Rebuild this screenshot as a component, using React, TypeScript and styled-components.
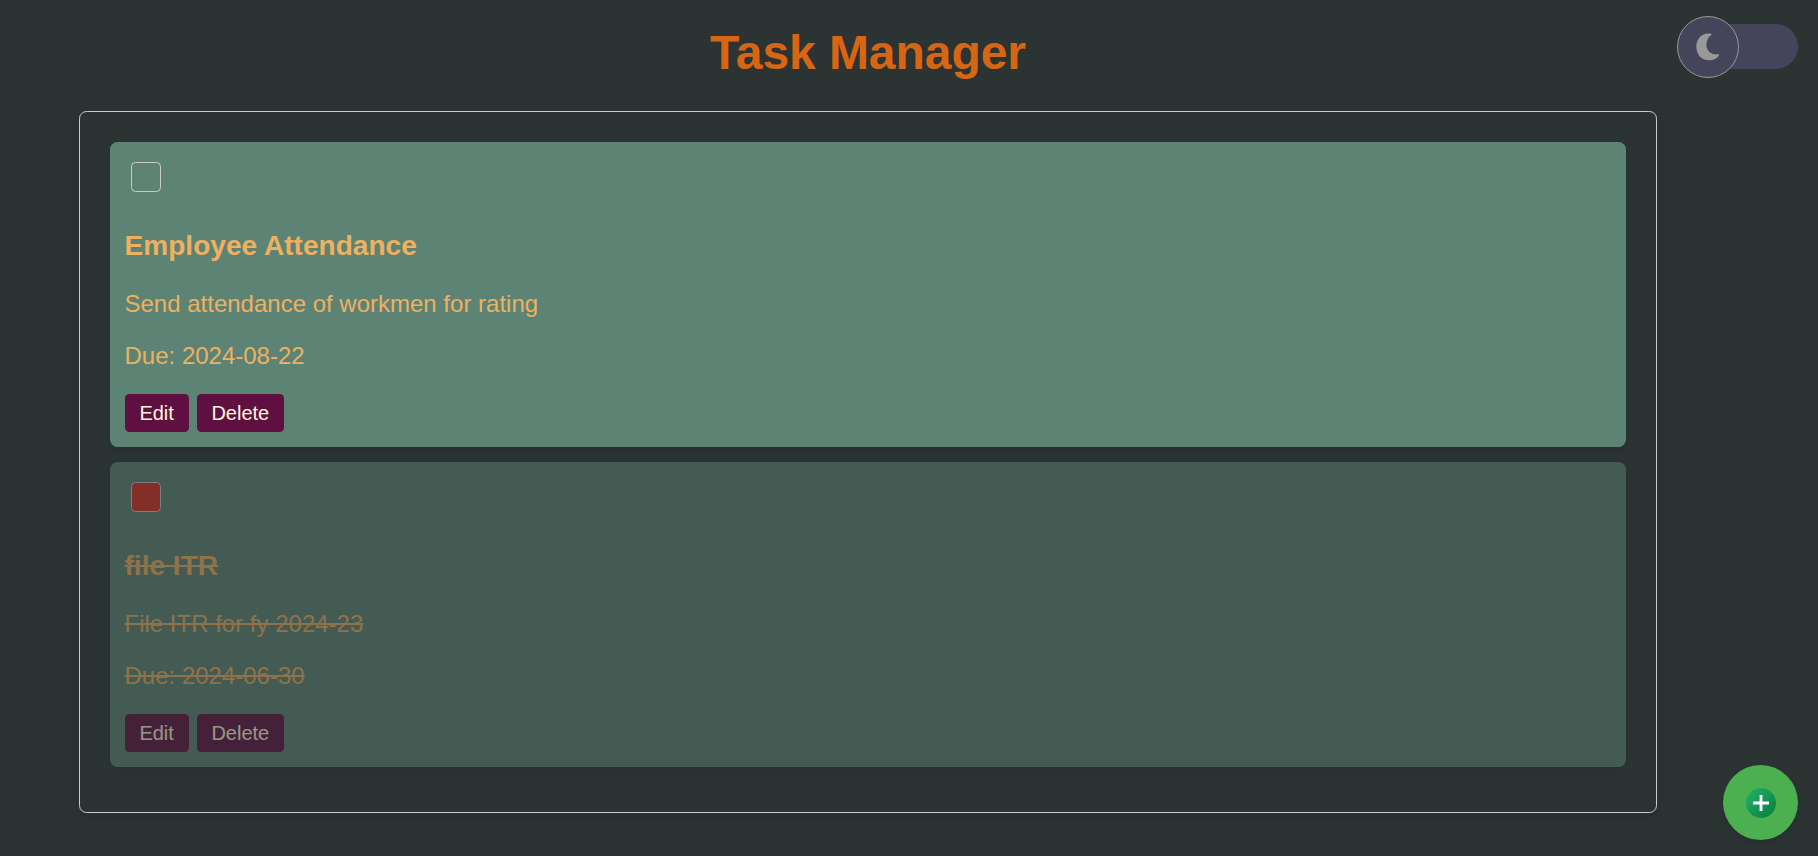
import React from 'react';
import styled, { createGlobalStyle } from 'styled-components';

const GlobalStyle = createGlobalStyle`
  *, *::before, *::after { box-sizing: border-box; }
  html { background: #2c3333; }
  body {
    margin: 0;
    background: #2c3333;
    color: #edb161;
    font-family: "Liberation Sans", Arial, sans-serif;
    font-size: 24px;
    overflow: hidden;
  }
`;

const Page = styled.div`
  min-height: 856px;
  width: 1736px;
  padding: 25px 79px 0;
`;

const Heading = styled.h1`
  margin: 0 0 30px;
  height: 56px;
  line-height: 56px;
  font-size: 48px;
  letter-spacing: -0.06px;
  text-align: center;
  color: #d76614;
`;

const TaskList = styled.main`
  border: 1px solid #ccc;
  border-radius: 7.5px;
  padding: 30px;
  box-shadow: 0 3px 12px rgba(0, 0, 0, 0.1);
`;

const Card = styled.article<{ $done: boolean }>`
  height: 305px;
  padding: 15px;
  margin-bottom: 15px;
  border-radius: 7.5px;
  background: #5d8374;
  box-shadow: 0 3px 7.5px rgba(0, 0, 0, 0.1);
  opacity: ${(p) => (p.$done ? 0.5 : 1)};
`;

const CheckBox = styled.button<{ $done: boolean }>`
  display: block;
  width: 30px;
  height: 30px;
  margin: 5px 6px 0;
  padding: 0;
  border: 1px solid #ccc;
  border-radius: 4.5px;
  background: ${(p) => (p.$done ? '#dc2a20' : 'transparent')};
`;

const Title = styled.h3<{ $done: boolean }>`
  margin: 38px 0 0 -0.5px;
  height: 32px;
  line-height: 32px;
  font-size: 28.08px;
  text-decoration: ${(p) => (p.$done ? 'line-through' : 'none')};
`;

const Line = styled.p<{ $done: boolean }>`
  margin: 28px 0 24px -0.5px;
  height: 28px;
  line-height: 28px;
  text-decoration: ${(p) => (p.$done ? 'line-through' : 'none')};
  & + & { margin-top: 0; }
`;

const Actions = styled.div`
  display: flex;
  gap: 8px;
`;

const Action = styled.button<{ $width: number }>`
  width: ${(p) => p.$width}px;
  height: 38px;
  padding: 0 0 0 14.4px;
  border: 0;
  border-radius: 4.5px;
  background: #5f0f40;
  color: #fff8dc;
  font: 20px "Liberation Sans", Arial, sans-serif;
  text-align: left;
`;

const ThemeSwitch = styled.button`
  position: fixed;
  top: 24px;
  right: 20px;
  width: 90px;
  height: 45px;
  padding: 0;
  border: 0;
  border-radius: 22.5px;
  background: #44455a;
`;

const Knob = styled.span`
  position: absolute;
  top: -8px;
  left: -31px;
  display: grid;
  place-items: center;
  width: 62px;
  height: 62px;
  border: 1px solid #999;
  border-radius: 50%;
  background: #44455a;
`;

const AddButton = styled.button`
  position: fixed;
  right: 20px;
  bottom: 16px;
  display: grid;
  place-items: center;
  width: 75px;
  height: 75px;
  padding: 0;
  border: 0;
  border-radius: 50%;
  background: #4caf50;
  box-shadow: 0 3px 7.5px rgba(0, 0, 0, 0.1);
`;

const MoonIcon = () => (
  <svg width="24" height="28" viewBox="0 0 24 28" aria-hidden="true">
    <path d="M12.5 .4C5 .4 .3 6.5 .3 13.8C.3 21.5 5.5 27.3 13 27.3C17.6 27.3 21.4 25.3 22.9 22.4C23.2 21.6 22.8 21.2 22 21.3C15.5 22.3 10.4 18 10.4 11.8C10.4 7.4 12.2 4 15.3 1.9C15.8 1.4 15.6 .9 15 .7C14.3 .5 13.5 .4 12.5 .4Z" fill="#999" />
  </svg>
);

const PlusIcon = () => (
  <svg width="30" height="30" viewBox="0 0 30 30" aria-hidden="true">
    <defs>
      <linearGradient id="plus-fill" x1="0" y1="0" x2="1" y2="1">
        <stop offset="0.1" stopColor="#21ad64" />
        <stop offset="0.9" stopColor="#088242" />
      </linearGradient>
    </defs>
    <circle cx="15" cy="15" r="15" fill="url(#plus-fill)" />
    <path d="M15 7v16M7 15h16" stroke="#fff" strokeWidth="2.8" />
  </svg>
);

const tasks = [
  { title: 'Employee Attendance', note: 'Send attendance of workmen for rating', due: '2024-08-22', done: false },
  { title: 'file ITR', note: 'File ITR for fy 2024-23', due: '2024-06-30', done: true },
];

export default function App() {
  return (
    <>
      <GlobalStyle />
      <Page>
        <Heading>Task Manager</Heading>
        <TaskList>
          {tasks.map((t) => (
            <Card key={t.title} $done={t.done}>
              <CheckBox $done={t.done} aria-label="Toggle task" />
              <Title $done={t.done}>{t.title}</Title>
              <Line $done={t.done}>{t.note}</Line>
              <Line $done={t.done}>Due: {t.due}</Line>
              <Actions>
                <Action $width={64}>Edit</Action>
                <Action $width={87}>Delete</Action>
              </Actions>
            </Card>
          ))}
        </TaskList>
      </Page>
      <ThemeSwitch aria-label="Dark mode">
        <Knob><MoonIcon /></Knob>
      </ThemeSwitch>
      <AddButton aria-label="Add task"><PlusIcon /></AddButton>
    </>
  );
}
